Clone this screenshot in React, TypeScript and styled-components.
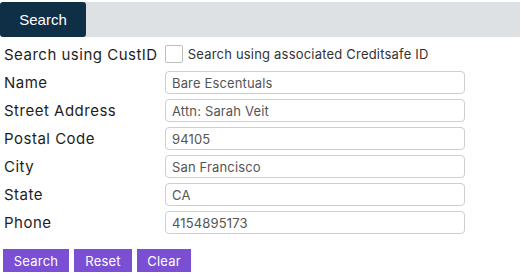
import React from "react";
import styled, { createGlobalStyle } from "styled-components";

const GlobalStyle = createGlobalStyle`
  html, body {
    margin: 0;
    padding: 0;
    background: #ffffff;
  }
  body {
    font-family: Inter, "Noto Sans", sans-serif;
    color: #222;
  }
`;

const Page = styled.div`
  width: 521px;
  padding-top: 2px;
`;

const TabBar = styled.div`
  display: flex;
  height: 35px;
  background: #dde1e4;
  margin-right: 1px;
  border-radius: 3px 0 0 3px;
`;

const Tab = styled.div`
  width: 86px;
  display: flex;
  align-items: center;
  justify-content: center;
  background: #0f2f46;
  color: #ffffff;
  font-family: "Liberation Sans", Arial, sans-serif;
  font-size: 15px;
  border-radius: 3px;
`;

const Form = styled.div`
  padding: 5px 0 0 4px;
`;

const OptionRow = styled.div`
  display: flex;
  align-items: center;
  height: 24px;
`;

const Label = styled.label`
  font-size: 15px;
  letter-spacing: 0.5px;
  color: #1e1e1e;
  width: 161px;
  flex: none;
`;

const InlineLabel = styled.span`
  font-size: 15px;
  letter-spacing: 0.5px;
  color: #1e1e1e;
`;

const Check = styled.span`
  width: 16px;
  height: 16px;
  border: 1px solid #bdbdbd;
  border-radius: 2px;
  margin: 0 5px 0 7px;
`;

const SmallText = styled.span`
  font-size: 13px;
  letter-spacing: 0.2px;
  color: #333;
`;

const Fields = styled.div`
  display: flex;
  flex-direction: column;
  gap: 5px;
  margin-top: 5px;
`;

const FieldRow = styled.div`
  display: flex;
  align-items: center;
`;

const Input = styled.div`
  box-sizing: border-box;
  width: 300px;
  height: 23px;
  border: 1px solid #cfcfcf;
  border-radius: 4px;
  padding: 0 6px;
  display: flex;
  align-items: center;
  font-size: 13px;
  letter-spacing: 0.15px;
  color: #555;
`;

const Buttons = styled.div`
  display: flex;
  gap: 5px;
  margin: 15px 0 0 -1px;
`;

const Button = styled.button<{ $w: number }>`
  width: ${(p) => p.$w}px;
  height: 23px;
  border: none;
  padding: 0;
  background: #7b4fd3;
  color: #ffffff;
  font-family: Inter, "Noto Sans", sans-serif;
  font-size: 13px;
  letter-spacing: 0.2px;
`;

const fields = [
  ["Name", "Bare Escentuals"],
  ["Street Address", "Attn: Sarah Veit"],
  ["Postal Code", "94105"],
  ["City", "San Francisco"],
  ["State", "CA"],
  ["Phone", "4154895173"],
];

export default function App() {
  return (
    <Page>
      <GlobalStyle />
      <TabBar>
        <Tab>Search</Tab>
      </TabBar>
      <Form>
        <OptionRow>
          <InlineLabel>Search using CustID</InlineLabel>
          <Check />
          <SmallText>Search using associated Creditsafe ID</SmallText>
        </OptionRow>
        <Fields>
          {fields.map(([label, value]) => (
            <FieldRow key={label}>
              <Label>{label}</Label>
              <Input>{value}</Input>
            </FieldRow>
          ))}
        </Fields>
        <Buttons>
          <Button $w={66}>Search</Button>
          <Button $w={58}>Reset</Button>
          <Button $w={54}>Clear</Button>
        </Buttons>
      </Form>
    </Page>
  );
}
